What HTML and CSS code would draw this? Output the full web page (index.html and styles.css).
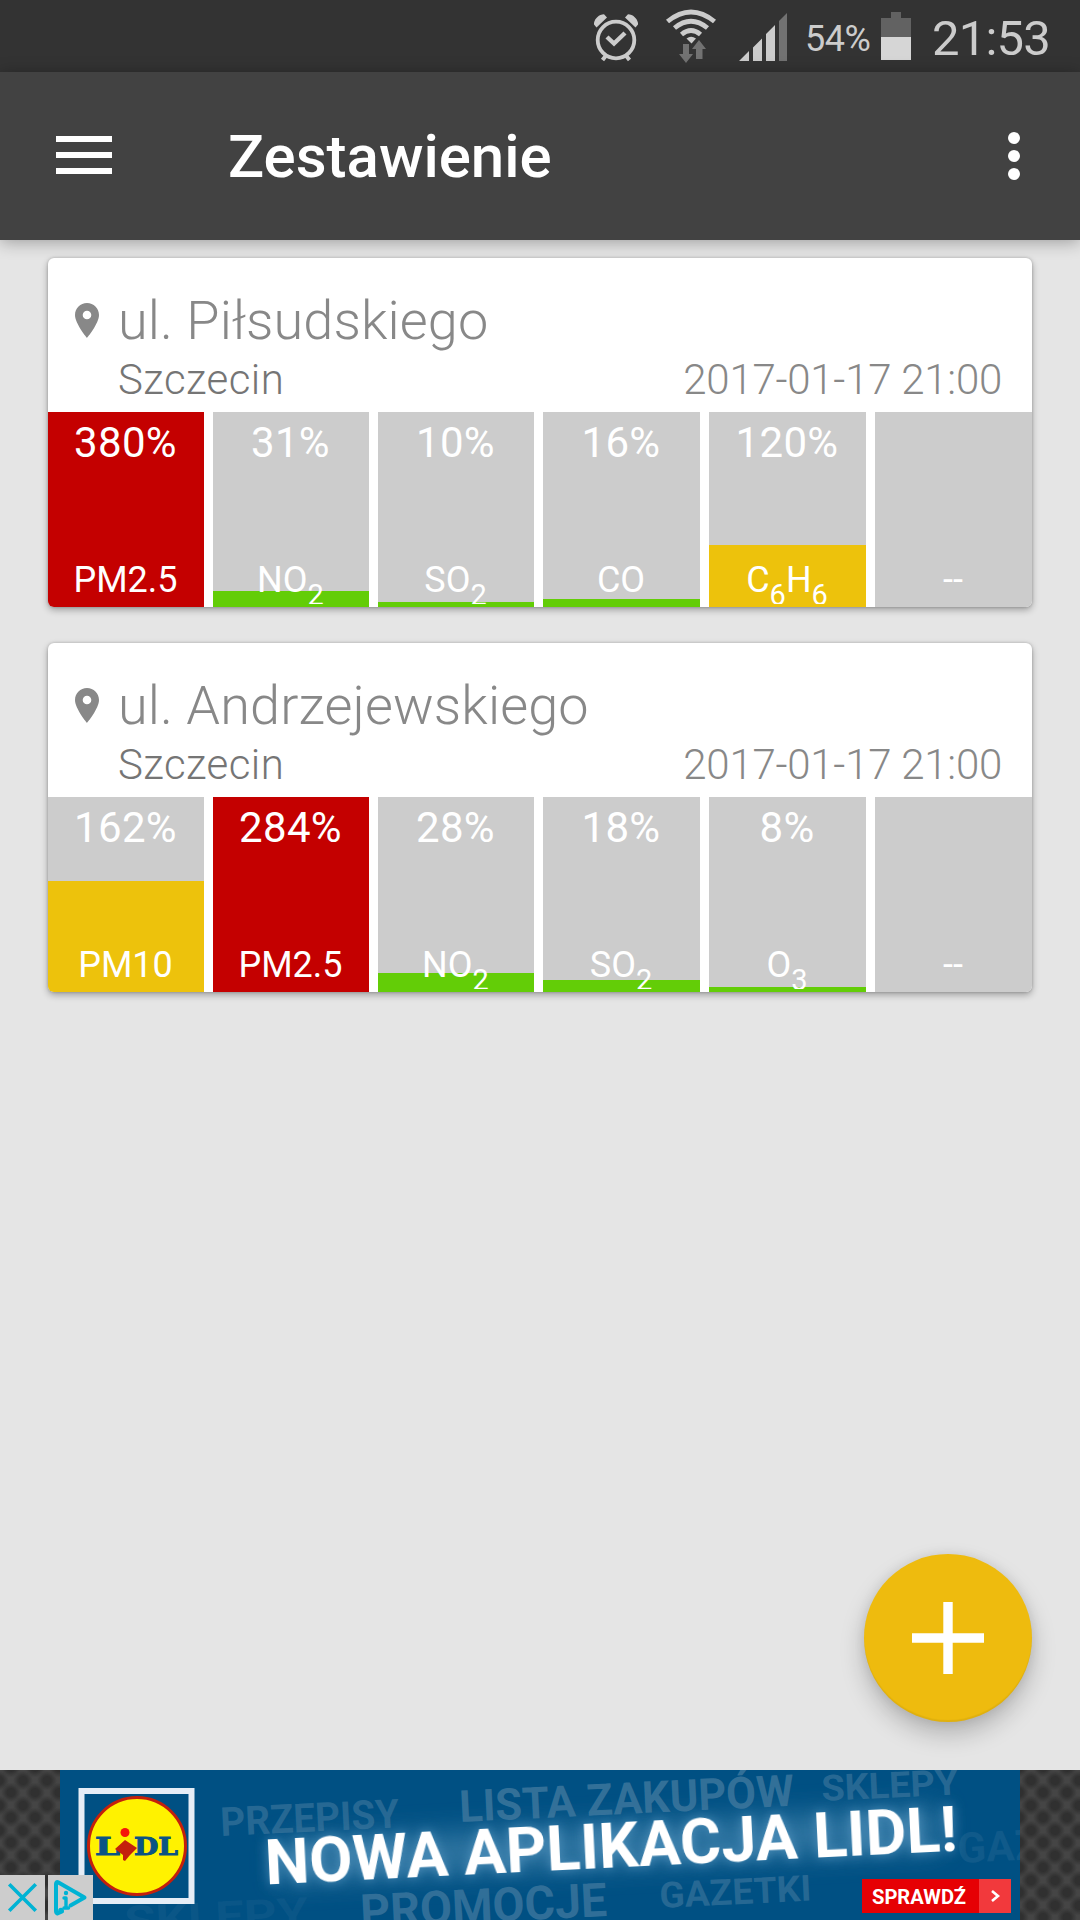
FILE: index.html
```html
<!DOCTYPE html>
<html lang="pl">
<head>
<meta charset="utf-8">
<title>Zestawienie</title>
<link rel="stylesheet" href="styles.css">
</head>
<body>
<div class="screen">
  <div class="status-bar">
    <svg class="icon-alarm" width="46" height="50" viewBox="593 12 46 50">
      <circle cx="616" cy="40" r="18.300" fill="none" stroke="#ccc" stroke-width="3.800"/>
      <path d="M607 37l7 6.500 11-10.500" fill="none" stroke="#ccc" stroke-width="4.400"/>
      <path d="M594 23C595 18 599 14.500 604 14.200L607 17.500 596.500 27.500 594 24.500zM638 23C637 18 633 14.500 628 14.200L625 17.500 635.500 27.500 638 24.500z" fill="#ccc"/>
      <path d="M606.500 55l-4 5M625.500 55l4 5" stroke="#ccc" stroke-width="4"/>
    </svg>
    <svg class="icon-wifi" width="52" height="56" viewBox="665 9 52 56">
      <g fill="none" stroke="#ccc">
        <path d="M667.500 21.500Q691 2.500 714.500 21.500" stroke-width="4.800"/>
        <path d="M674.500 28Q691 14.500 707.500 28" stroke-width="4.800"/>
        <path d="M681.500 34.500Q691 26.500 700.500 34.500" stroke-width="4.800"/>
      </g>
      <path d="M686.500 38.500Q691 35 696 38.500L691.500 43.500z" fill="#ccc"/>
      <path d="M683 44h6v10h4l-7 9-7-9h4zM696 59h6.500V49h3.500l-7-9-7 9h4z" fill="#727272"/>
    </svg>
    <svg class="icon-signal" width="48" height="48" viewBox="739 13 48 48">
      <path d="M739 61l10-10v10zM753 61V47.500l9-9V61zM766 61V34l9-9V61z" fill="#ccc"/>
      <path d="M779 61V21l8-8v48z" fill="#727272"/>
    </svg>
    <span class="battery-level">54%</span>
    <svg class="icon-battery" width="30" height="48" viewBox="0 0 30 48">
      <path d="M10 0h10v6h10v20H0V6h10z" fill="#626262"/>
      <path d="M0 25h30v23H0z" fill="#d6d6d6"/>
    </svg>
    <span class="clock">21:53</span>
  </div>

  <header class="app-bar">
    <svg class="menu" width="56" height="38" viewBox="0 0 56 38"><path d="M0 0h56v6H0zM0 16h56v6H0zM0 32h56v6H0z" fill="#fff"/></svg>
    <h1 class="title">Zestawienie</h1>
    <svg class="more" width="12" height="48" viewBox="0 0 12 48" fill="#fff"><circle cx="6" cy="6" r="6"/><circle cx="6" cy="24" r="6"/><circle cx="6" cy="42" r="6"/></svg>
  </header>

  <main class="content">
    <section class="card">
      <div class="card-head">
        <svg class="pin" width="24" height="35" viewBox="0 0 24 35"><path fill-rule="evenodd" d="M12 0C5.400 0 0 5.400 0 12c0 8.500 12 23 12 23s12-14.500 12-23C24 5.400 18.600 0 12 0zm0 7.700a4.300 4.300 0 110 8.600 4.300 4.300 0 010-8.600z" fill="#888"/></svg>
        <h2 class="street">ul. Piłsudskiego</h2>
        <span class="city">Szczecin</span>
        <time class="date">2017-01-17 21:00</time>
      </div>
      <div class="tiles">
        <div class="tile"><div class="level red" style="height:195px"></div><b class="value">380%</b><span class="name">PM2.5</span></div>
        <div class="tile"><div class="level green" style="height:16px"></div><b class="value">31%</b><span class="name">NO<sub>2</sub></span></div>
        <div class="tile"><div class="level green" style="height:5px"></div><b class="value">10%</b><span class="name">SO<sub>2</sub></span></div>
        <div class="tile"><div class="level green" style="height:8px"></div><b class="value">16%</b><span class="name">CO</span></div>
        <div class="tile"><div class="level yellow" style="height:62px"></div><b class="value">120%</b><span class="name">C<sub>6</sub>H<sub>6</sub></span></div>
        <div class="tile"><b class="value"></b><span class="name">--</span></div>
      </div>
    </section>

    <section class="card">
      <div class="card-head">
        <svg class="pin" width="24" height="35" viewBox="0 0 24 35"><path fill-rule="evenodd" d="M12 0C5.400 0 0 5.400 0 12c0 8.500 12 23 12 23s12-14.500 12-23C24 5.400 18.600 0 12 0zm0 7.700a4.300 4.300 0 110 8.600 4.300 4.300 0 010-8.600z" fill="#888"/></svg>
        <h2 class="street">ul. Andrzejewskiego</h2>
        <span class="city">Szczecin</span>
        <time class="date">2017-01-17 21:00</time>
      </div>
      <div class="tiles">
        <div class="tile"><div class="level yellow" style="height:111px"></div><b class="value">162%</b><span class="name">PM10</span></div>
        <div class="tile"><div class="level red" style="height:195px"></div><b class="value">284%</b><span class="name">PM2.5</span></div>
        <div class="tile"><div class="level green" style="height:19px"></div><b class="value">28%</b><span class="name">NO<sub>2</sub></span></div>
        <div class="tile"><div class="level green" style="height:12.500px"></div><b class="value">18%</b><span class="name">SO<sub>2</sub></span></div>
        <div class="tile"><div class="level green" style="height:5.500px"></div><b class="value">8%</b><span class="name">O<sub>3</sub></span></div>
        <div class="tile"><b class="value"></b><span class="name">--</span></div>
      </div>
    </section>

    <button class="fab" aria-label="Dodaj"><svg width="72" height="72" viewBox="0 0 72 72"><path d="M31.300 0h9.400v31.300H72v9.400H40.700V72h-9.400V40.700H0v-9.400h31.300z" fill="#fff"/></svg></button>
  </main>

  <footer class="ad">
    <svg class="banner" width="960" height="150" viewBox="60 0 960 150">
      <defs>
        <filter id="glow" x="-10%" y="-60%" width="120%" height="220%"><feGaussianBlur stdDeviation="14"/></filter>
      </defs>
      <rect x="60" width="960" height="150" fill="#005083"/>
      <path d="M280 72L940 38v40L280 112z" fill="#3f82ac" opacity=".75" filter="url(#glow)"/>
      <g class="words">
        <text transform="translate(221 66) rotate(-2.800)" font-size="40" textLength="179" lengthAdjust="spacingAndGlyphs" fill-opacity=".6">PRZEPISY</text>
        <text transform="translate(460 52) rotate(-2.800)" font-size="44" textLength="335" lengthAdjust="spacingAndGlyphs" fill-opacity=".8">LISTA ZAKUPÓW</text>
        <text transform="translate(822 31) rotate(-2.800)" font-size="36" textLength="137" lengthAdjust="spacingAndGlyphs" fill-opacity=".6">SKLEPY</text>
        <text transform="translate(361 158) rotate(-2.800)" font-size="47" textLength="247" lengthAdjust="spacingAndGlyphs" fill-opacity=".75">PROMOCJE</text>
        <text transform="translate(660 138) rotate(-2.800)" font-size="36" textLength="152" lengthAdjust="spacingAndGlyphs" fill-opacity=".6">GAZETKI</text>
        <text transform="translate(958 93) rotate(-2.800)" font-size="42" textLength="83" lengthAdjust="spacingAndGlyphs" fill-opacity=".25">GAZ</text>
        <text transform="translate(125 166) rotate(-2.800)" font-size="42" textLength="184" lengthAdjust="spacingAndGlyphs" fill-opacity=".16">SKLEPY</text>
      </g>
      <text class="slogan" transform="translate(266 114.500) rotate(-2.800)" font-size="63" textLength="693" lengthAdjust="spacingAndGlyphs">NOWA APLIKACJA LIDL!</text>
      <rect x="81.500" y="21" width="110" height="110" fill="#005083" stroke="#e6edf6" stroke-width="6"/>
      <circle cx="137" cy="76" r="48.500" fill="#fff200" stroke="#c4200c" stroke-width="3"/>
      <g class="lidl">
        <text x="95" y="84.500" font-size="24" textLength="25" lengthAdjust="spacingAndGlyphs">L</text>
        <text x="134" y="84.500" font-size="24" textLength="44" lengthAdjust="spacingAndGlyphs">DL</text>
      </g>
      <circle cx="125" cy="62.500" r="4.500" fill="#f5150a"/>
      <path d="M115 79l10-9 12 8-7 7-5 6-2-1v-5z" fill="#c4200c"/>
      <rect x="862" y="109" width="117" height="34" fill="#e60004"/>
      <rect x="979" y="109" width="32" height="34" fill="#f2393c"/>
      <text class="cta" x="872" y="134" font-size="20" textLength="94" lengthAdjust="spacingAndGlyphs">SPRAWDŹ</text>
      <path d="M992 121l6 5-6 5" fill="none" stroke="#fff" stroke-width="2.600"/>
    </svg>
    <div class="ad-controls">
      <svg width="45" height="45" viewBox="0 0 45 45"><rect width="45" height="45" fill="#cdcdcd"/><path d="M10.500 10.500l24 24M34.500 10.500l-24 24" stroke="#00b3d4" stroke-width="3.600" stroke-linecap="square"/></svg>
      <svg width="45" height="45" viewBox="0 0 45 45"><rect width="45" height="45" fill="#cdcdcd"/><g fill="none" stroke="#00b3d4" stroke-width="4" stroke-linejoin="round" stroke-linecap="round"><path d="M14 36.500l-4.500 2Q8 38 8 36V9Q8 6 10.500 7.500L36.500 22.500 22.500 30.500"/><path d="M16 23h2v10M16 33h4.500" stroke-width="3.400"/></g><circle cx="18" cy="18" r="2.200" fill="#00b3d4"/><circle cx="13" cy="35.500" r="2.800" fill="#00b3d4"/></svg>
    </div>
  </footer>
</div>
</body>
</html>
```
FILE: styles.css
```css
* { box-sizing: border-box; }

body {
  margin: 0;
  font-family: Roboto, sans-serif;
}

svg { display: block; flex: none; }

.screen {
  width: 1080px;
  height: 1920px;
  display: flex;
  flex-direction: column;
  background: #e5e5e5;
  overflow: hidden;
}

/* Status bar */
.status-bar {
  height: 72px;
  flex: none;
  display: flex;
  justify-content: flex-end;
  align-items: flex-start;
  padding-right: 30px;
  background: #333;
  color: #ccc;
  white-space: nowrap;
}

.icon-alarm { margin: 12px 26px 0 0; }
.icon-wifi { margin: 9px 22px 0 0; }
.icon-signal { margin: 13px 18px 0 0; }
.icon-battery { margin: 12px 20px 0 0; }

.battery-level {
  width: 76px;
  margin-top: 18px;
  font-size: 36px;
  line-height: 42px;
  letter-spacing: -0.5px;
}

.clock {
  width: 119px;
  margin-top: 11px;
  padding-left: 1px;
  font-size: 49px;
  line-height: 56px;
  letter-spacing: -0.8px;
}

/* App bar */
.app-bar {
  position: relative;
  height: 168px;
  flex: none;
  display: flex;
  align-items: flex-start;
  padding: 0 60px 0 56px;
  background: #424242;
  box-shadow: 0 2px 16px rgba(0, 0, 0, .32);
}

.menu { margin-top: 64px; }

.title {
  flex: 1;
  margin: 50px 0 0 116px;
  color: #fff;
  font-size: 60px;
  font-weight: 500;
  line-height: 70px;
}

.more { margin-top: 60px; }

/* Measurement cards */
.content {
  position: relative;
  flex: 1;
  display: flex;
  flex-direction: column;
  gap: 36px;
  padding: 18px 48px 0;
}

.card {
  height: 349px;
  flex: none;
  border-radius: 6px;
  background: #fff;
  box-shadow: 0 3px 7px rgba(0, 0, 0, .3), 0 0 3px rgba(0, 0, 0, .2);
  overflow: hidden;
}

.card-head {
  height: 154px;
  display: grid;
  grid-template-columns: 43px auto 1fr;
  grid-template-rows: 62px 50px;
  padding: 32px 30px 0 27px;
  color: #888;
  font-weight: 300;
}

.pin { margin-top: 13px; }

.street {
  grid-column: 2 / 4;
  margin: 0;
  font-size: 54px;
  font-weight: 300;
  line-height: 62px;
  letter-spacing: 0.12px;
}

.city,
.date {
  font-size: 42px;
  line-height: 56px;
}

.city {
  grid-column: 2;
  color: #757575;
  letter-spacing: 0.45px;
}

.date {
  text-align: right;
  letter-spacing: -0.25px;
}

.tiles {
  display: grid;
  grid-template-columns: repeat(3, 156px) repeat(3, 157px);
  gap: 9px;
  height: 195px;
}

.tile {
  position: relative;
  display: flex;
  flex-direction: column;
  justify-content: space-between;
  background: #ccc;
  color: #fff;
  text-align: center;
}

.level {
  position: absolute;
  left: 0;
  right: 0;
  bottom: 0;
}

.red { background: #c40000; }
.green { background: #63cd07; }
.yellow { background: #edc20c; }

.value,
.name {
  position: relative;
  padding-right: 1px;
  font-weight: 400;
}

.value {
  margin-top: 6px;
  font-size: 42px;
  line-height: 49px;
  letter-spacing: 0.3px;
}

.name {
  height: 45px;
  margin-bottom: 3px;
  font-size: 36px;
  line-height: 42px;
  overflow: hidden;
}

.name sub {
  position: relative;
  top: 13px;
  font-size: 29px;
  line-height: 0;
  vertical-align: baseline;
}

/* Floating action button */
.fab {
  position: absolute;
  right: 48px;
  bottom: 48px;
  width: 168px;
  height: 168px;
  padding: 48px;
  border: 0;
  border-radius: 50%;
  background: #eebb0e;
  box-shadow: 0 12px 24px rgba(0, 0, 0, .22), 0 0 12px rgba(0, 0, 0, .08), inset 0 -2px 1px rgba(0, 0, 0, .06);
}

/* Ad banner */
.ad {
  position: relative;
  height: 150px;
  flex: none;
  display: flex;
  justify-content: center;
  background-color: #454545;
  background-image:
    radial-gradient(circle at 50% 50%, #303030 0 4px, transparent 10px),
    radial-gradient(circle at 50% 50%, #303030 0 4px, transparent 10px);
  background-size: 24px 25px;
  background-position: 11px -2px, -1px 10px;
}

.words { fill: #41799f; font-family: Roboto, sans-serif; font-weight: 700; }

.slogan {
  fill: #fff;
  font-family: Roboto, sans-serif;
  font-weight: 700;
  filter: drop-shadow(0 0 6px rgba(110, 170, 210, .6));
}

.lidl {
  fill: #0b5484;
  stroke: #0b5484;
  stroke-width: 1px;
  font-family: "DejaVu Serif", serif;
  font-weight: 700;
}

.cta { fill: #fff; font-family: Roboto, sans-serif; font-weight: 700; }

.ad-controls {
  position: absolute;
  left: 0;
  bottom: 0;
  display: flex;
  gap: 3px;
}
```
